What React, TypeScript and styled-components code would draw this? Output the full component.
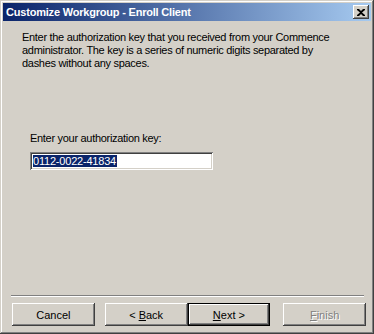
import React from "react";
import styled, { createGlobalStyle } from "styled-components";

const GlobalStyle = createGlobalStyle`
  html, body {
    margin: 0;
    padding: 0;
    background: #d4d0c8;
  }
  body {
    font-family: Tahoma, "Liberation Sans", Arial, sans-serif;
    font-size: 11px;
  }
`;

const Window = styled.div`
  width: 374px;
  height: 334px;
  box-sizing: border-box;
  padding: 3px;
  background: #d4d0c8;
  box-shadow: inset -1px -1px #404040, inset 1px 1px #d4d0c8,
    inset -2px -2px #808080, inset 2px 2px #ffffff;
  display: flex;
  flex-direction: column;
`;

const TitleBar = styled.div`
  height: 18px;
  display: flex;
  align-items: center;
  padding: 0 2px 0 3px;
  background: linear-gradient(to right, #0a246a, #a6caf0);
`;

const Title = styled.span`
  flex: 1;
  color: #ffffff;
  font-weight: bold;
  font-size: 11px;
  letter-spacing: -0.2px;
  line-height: 18px;
  white-space: nowrap;
`;

const CloseButton = styled.div`
  width: 16px;
  height: 14px;
  box-sizing: border-box;
  background: #d4d0c8;
  box-shadow: inset -1px -1px #404040, inset 1px 1px #ffffff,
    inset -2px -2px #808080, inset 2px 2px #d4d0c8;
  display: flex;
  align-items: center;
  justify-content: center;
`;

const Body = styled.div`
  flex: 1;
  display: flex;
  flex-direction: column;
  padding: 10px 5px 5px 5px;
  color: #000000;
`;

const Intro = styled.p`
  margin: 0 0 0 14px;
  line-height: 13px;
  letter-spacing: -0.3px;
  white-space: nowrap;
`;

const Field = styled.div`
  margin: 62px 0 0 22px;
  display: flex;
  flex-direction: column;
  gap: 7px;
`;

const Label = styled.label`
  line-height: 13px;
  letter-spacing: -0.3px;
`;

const KeyInput = styled.div`
  width: 183px;
  height: 18px;
  box-sizing: border-box;
  background: #ffffff;
  box-shadow: inset 1px 1px #808080, inset -1px -1px #ffffff,
    inset 2px 2px #404040, inset -2px -2px #d4d0c8;
  padding: 3px 3px 0 2px;
  display: flex;
  align-items: flex-start;
`;

const Selected = styled.span`
  background: #0a246a;
  color: #ffffff;
  line-height: 12px;
  height: 12px;
  padding-right: 1px;
  border-left: 1px solid #ffffff;
  letter-spacing: -0.2px;
`;

const Spacer = styled.div`
  flex: 1;
`;

const Separator = styled.div`
  margin: 0 2px 0 3px;
  height: 0;
  border-top: 1px solid #808080;
  border-bottom: 1px solid #ffffff;
`;

const ButtonRow = styled.div`
  display: flex;
  margin: 6px 0 0 4px;
  height: 23px;
`;

const Button = styled.div<{ $default?: boolean; $gap?: number }>`
  width: 83px;
  height: 23px;
  box-sizing: border-box;
  margin-left: ${(p) => p.$gap ?? 0}px;
  display: flex;
  align-items: center;
  justify-content: center;
  background: #d4d0c8;
  box-shadow: ${(p) =>
    p.$default
      ? "inset 0 0 0 1px #000000, inset -2px -2px #404040, inset 2px 2px #ffffff, inset -3px -3px #808080"
      : "inset -1px -1px #404040, inset 1px 1px #ffffff, inset -2px -2px #808080, inset 2px 2px #d4d0c8"};
`;

const ButtonLabel = styled.span<{ $disabled?: boolean }>`
  color: ${(p) => (p.$disabled ? "#808080" : "#000000")};
  text-shadow: ${(p) => (p.$disabled ? "1px 1px #ffffff" : "none")};
  white-space: pre;
`;

const Key = styled.span`
  text-decoration: underline;
`;

export default function App() {
  return (
    <>
      <GlobalStyle />
      <Window>
        <TitleBar>
          <Title>Customize Workgroup - Enroll Client</Title>
          <CloseButton>
            <svg width="8" height="7" viewBox="0 0 8 7">
              <path
                d="M0 0h2l2 2 2-2h2v1L5 3.5 8 6v1H6L4 5 2 7H0V6l3-2.5L0 1z"
                fill="#000"
              />
            </svg>
          </CloseButton>
        </TitleBar>
        <Body>
          <Intro>
            Enter the authorization key that you received from your Commence
            <br />
            administrator. The key is a series of numeric digits separated by
            <br />
            dashes without any spaces.
          </Intro>
          <Field>
            <Label>Enter your authorization key:</Label>
            <KeyInput>
              <Selected>0112-0022-41834</Selected>
            </KeyInput>
          </Field>
          <Spacer />
          <Separator />
          <ButtonRow>
            <Button>
              <ButtonLabel>Cancel</ButtonLabel>
            </Button>
            <Button $gap={10}>
              <ButtonLabel>
                {"< "}
                <Key>B</Key>ack
              </ButtonLabel>
            </Button>
            <Button $default>
              <ButtonLabel>
                <Key>N</Key>
                {"ext >"}
              </ButtonLabel>
            </Button>
            <Button $gap={13}>
              <ButtonLabel $disabled>
                <Key>F</Key>inish
              </ButtonLabel>
            </Button>
          </ButtonRow>
        </Body>
      </Window>
    </>
  );
}
